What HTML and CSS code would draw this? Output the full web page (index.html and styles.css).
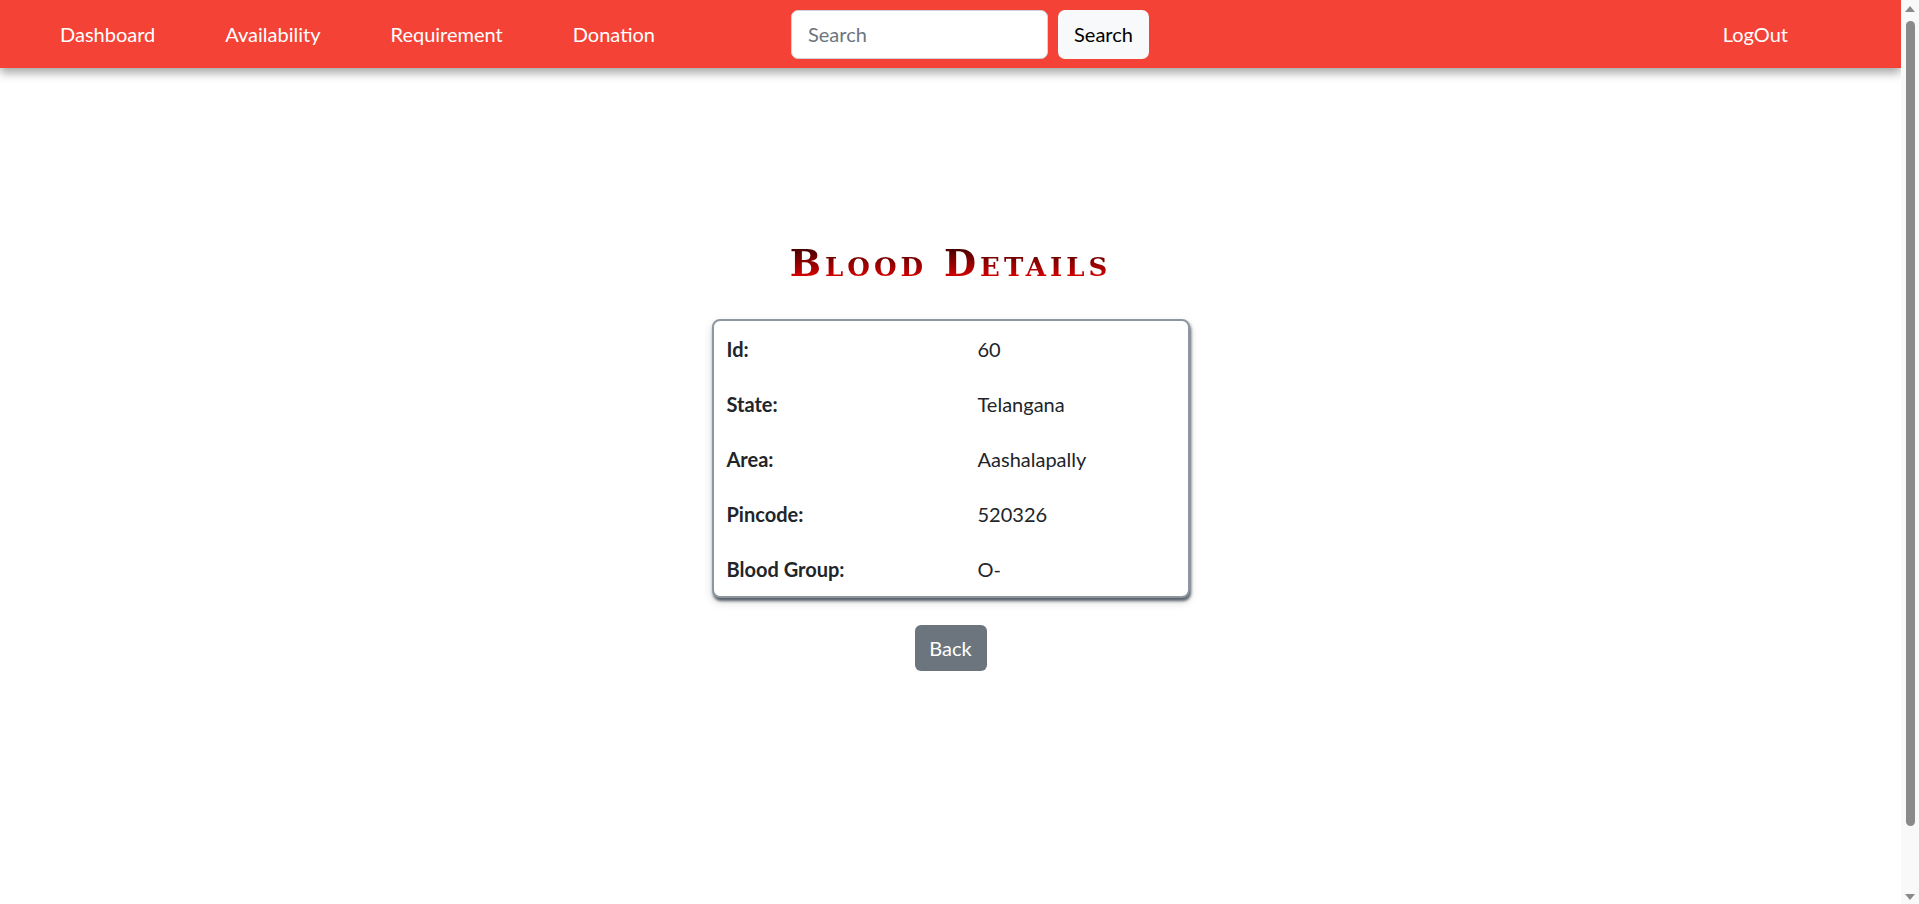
FILE: index.html
```html
<!DOCTYPE html>
<html lang="en">
<head>
<meta charset="utf-8">
<title>Blood Details</title>
<link rel="stylesheet" href="styles.css">
</head>
<body>
<nav class="navbar">
  <ul class="nav-links">
    <li><a class="nav-link" href="#">Dashboard</a></li>
    <li><a class="nav-link" href="#">Availability</a></li>
    <li><a class="nav-link" href="#">Requirement</a></li>
    <li><a class="nav-link" href="#">Donation</a></li>
  </ul>
  <form class="search-form">
    <input class="search-input" type="text" placeholder="Search">
    <button class="search-btn" type="button">Search</button>
  </form>
  <a class="nav-link logout" href="#">LogOut</a>
</nav>
<main class="content">
  <h1 class="title">Blood Details</h1>
  <div class="card">
    <table class="details">
      <tr><th>Id:</th><td>60</td></tr>
      <tr><th>State:</th><td>Telangana</td></tr>
      <tr><th>Area:</th><td>Aashalapally</td></tr>
      <tr><th>Pincode:</th><td>520326</td></tr>
      <tr><th>Blood Group:</th><td>O-</td></tr>
    </table>
  </div>
  <button class="back-btn" type="button">Back</button>
</main>
<div class="scrollbar" aria-hidden="true">
  <span class="arrow arrow-up"></span>
  <span class="thumb"></span>
  <span class="arrow arrow-down"></span>
</div>
</body>
</html>
```

FILE: styles.css
```css
html {
  overflow: hidden;
}
body {
  margin: 0 18px 0 0;
  font-family: Lato, "Noto Sans", sans-serif;
  font-size: 20px;
  color: #212529;
  background: #fff;
  min-height: 904px;
}
.navbar {
  height: 68px;
  background: #f44336;
  display: flex;
  align-items: center;
  padding: 0 78px 0 25px;
  box-shadow: 0 5px 9px rgba(0, 0, 0, 0.35);
  position: relative;
  z-index: 1;
}
.nav-links {
  list-style: none;
  margin: 0;
  padding: 0;
  display: flex;
}
.nav-link {
  display: block;
  padding: 0 35px;
  color: #fff;
  text-decoration: none;
  line-height: 28px;
}
.search-form {
  display: flex;
  gap: 10px;
  margin-left: 101px;
}
.search-input {
  width: 257px;
  height: 49px;
  box-sizing: border-box;
  border: 1px solid #ced4da;
  border-radius: 7px;
  padding: 0 16px;
  font-family: inherit;
  font-size: 20px;
  color: #212529;
  background: #fff;
}
.search-input::placeholder {
  color: #6c757d;
}
.search-btn {
  width: 91px;
  height: 49px;
  border: none;
  border-radius: 7px;
  background: #f8f9fa;
  color: #000;
  font-family: inherit;
  font-size: 20px;
}
.logout {
  margin-left: auto;
}
.content {
  display: flex;
  flex-direction: column;
  align-items: center;
  padding-top: 172px;
}
.title {
  margin: 0 0 33px;
  font-family: "DejaVu Serif", serif;
  font-variant: small-caps;
  font-weight: bold;
  font-size: 37px;
  line-height: 46px;
  letter-spacing: 4px;
  background: linear-gradient(to bottom, #3e0000 15%, #e00000 85%);
  -webkit-background-clip: text;
  background-clip: text;
  color: transparent;
}
.card {
  width: 478px;
  box-sizing: border-box;
  border: 2px solid #8e979f;
  border-radius: 8px;
  box-shadow: 1px 3px 3px rgba(40, 52, 64, 0.75), 0 4px 10px rgba(0, 0, 0, 0.15);
  background: #fff;
}
.details {
  border-collapse: collapse;
  width: 100%;
}
.details th,
.details td {
  height: 55px;
  padding: 0 13px;
  text-align: left;
  vertical-align: middle;
}
.details th {
  width: 225px;
  font-weight: 700;
}
.back-btn {
  margin-top: 27px;
  width: 72px;
  height: 46px;
  border: none;
  border-radius: 6px;
  background: #6c757d;
  color: #fff;
  font-family: inherit;
  font-size: 20px;
}
.scrollbar {
  position: fixed;
  top: 0;
  right: 0;
  width: 18px;
  height: 904px;
  background: #f9f9f9;
  display: flex;
  flex-direction: column;
  align-items: center;
}
.arrow {
  width: 0;
  height: 0;
  border-left: 5px solid transparent;
  border-right: 5px solid transparent;
}
.arrow-up {
  margin-top: 6px;
  border-bottom: 6px solid #8a8a8a;
}
.arrow-down {
  margin-top: auto;
  margin-bottom: 4px;
  border-top: 6px solid #8a8a8a;
}
.thumb {
  margin-top: 9px;
  width: 9px;
  height: 805px;
  border-radius: 5px;
  background: #8a8a8a;
}
```
